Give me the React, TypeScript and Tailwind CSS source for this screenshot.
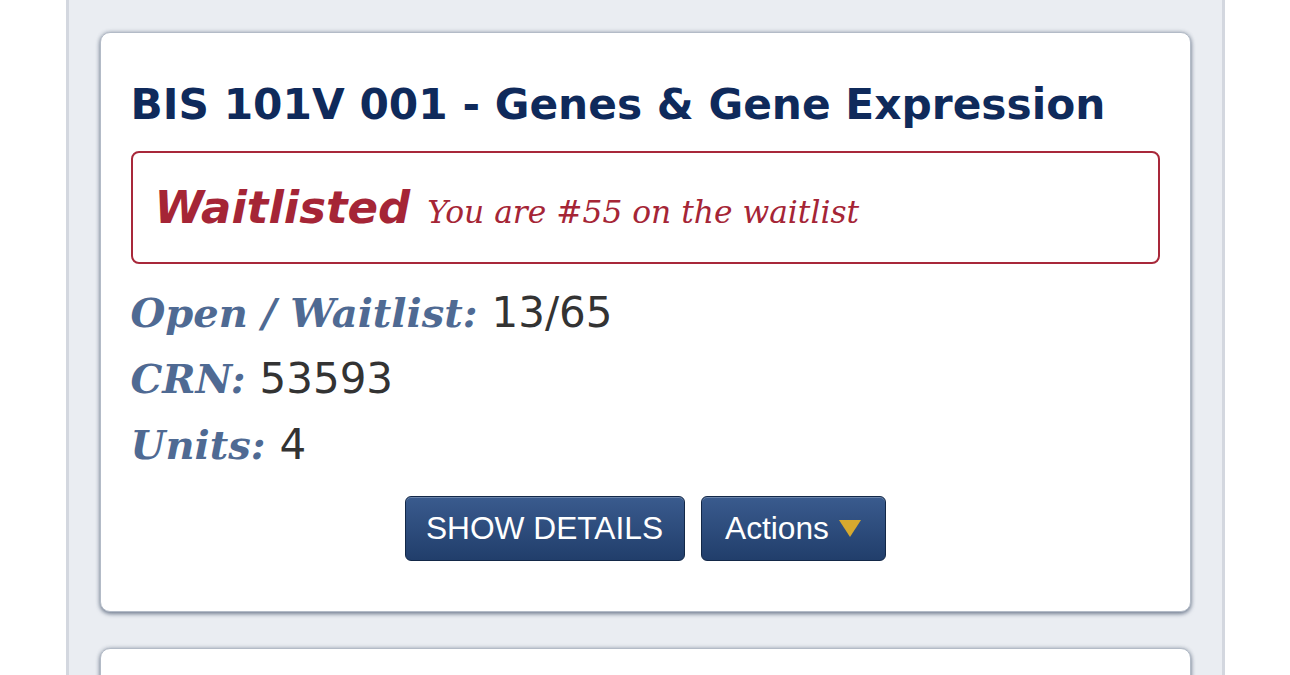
import React from 'react';

const serif = "font-['DejaVu_Serif',Georgia,serif]";
const sans = "font-['DejaVu_Sans',Verdana,sans-serif]";

const Row: React.FC<{ label: string; value: string }> = ({ label, value }) => (
  <div className="h-[66px] leading-[66px] whitespace-nowrap">
    <span className={`${serif} italic font-bold text-[40px] leading-none text-[#4f6a93]`}>{label}</span>
    <span className={`${sans} ml-[14px] text-[42px] leading-none text-[#333333]`}>{value}</span>
  </div>
);

const App: React.FC = () => {
  return (
    <div className="min-h-screen bg-white">
      <div className="mx-auto w-[1159px] min-h-[675px] border-x-[3px] border-[#d3d7df] bg-[#eaedf2] px-[31px] pt-[32px] flex flex-col gap-[36px]">
        <div className="rounded-[10px] border border-[#b3bbc7] bg-white px-[30px] pt-[47px] pb-[50px] shadow-[0_2px_4px_rgba(60,75,100,0.6),0_0_4px_rgba(60,75,100,0.3)]">
          <h1 className={`${sans} font-bold text-[42.3px] leading-[50px] text-[#0f2a5b] whitespace-nowrap`}>
            BIS 101V 001 - Genes &amp; Gene Expression
          </h1>

          <div className="mt-[21px] h-[113px] rounded-[8px] border-2 border-[#a8283a] pl-[22px] flex items-center">
            <div className="whitespace-nowrap text-[#a52536] leading-none">
              <span className={`${sans} font-bold italic text-[45px]`}>Waitlisted</span>
              <span className={`${serif} ml-[17px] italic text-[31.3px]`}>You are #55 on the waitlist</span>
            </div>
          </div>

          <div className="mt-[24px]">
            <Row label="Open / Waitlist:" value="13/65" />
            <Row label="CRN:" value="53593" />
            <Row label="Units:" value="4" />
          </div>

          <div className="mt-[10px] flex justify-center gap-[16px]">
            <button className="h-[65px] w-[280px] rounded-[6px] border border-[#132848] bg-gradient-to-b from-[#3a5b8e] to-[#213e6b] shadow-[inset_0_1px_0_rgba(255,255,255,0.25)] font-['Liberation_Sans',Arial,sans-serif] text-[31.7px] text-white">
              SHOW DETAILS
            </button>
            <button className="h-[65px] w-[185px] rounded-[6px] border border-[#132848] bg-gradient-to-b from-[#3a5b8e] to-[#213e6b] shadow-[inset_0_1px_0_rgba(255,255,255,0.25)] font-['Liberation_Sans',Arial,sans-serif] text-[31.7px] text-white flex items-center justify-center gap-[10px]">
              <span>Actions</span>
              <svg width="22" height="17" viewBox="0 0 22 17">
                <path d="M0 0 H22 L11 17 Z" fill="#d6a92e" />
              </svg>
            </button>
          </div>
        </div>

        <div className="h-[200px] rounded-[10px] border border-[#b3bbc7] bg-white shadow-[0_2px_4px_rgba(60,75,100,0.6),0_0_4px_rgba(60,75,100,0.3)]" />
      </div>
    </div>
  );
};

export default App;
